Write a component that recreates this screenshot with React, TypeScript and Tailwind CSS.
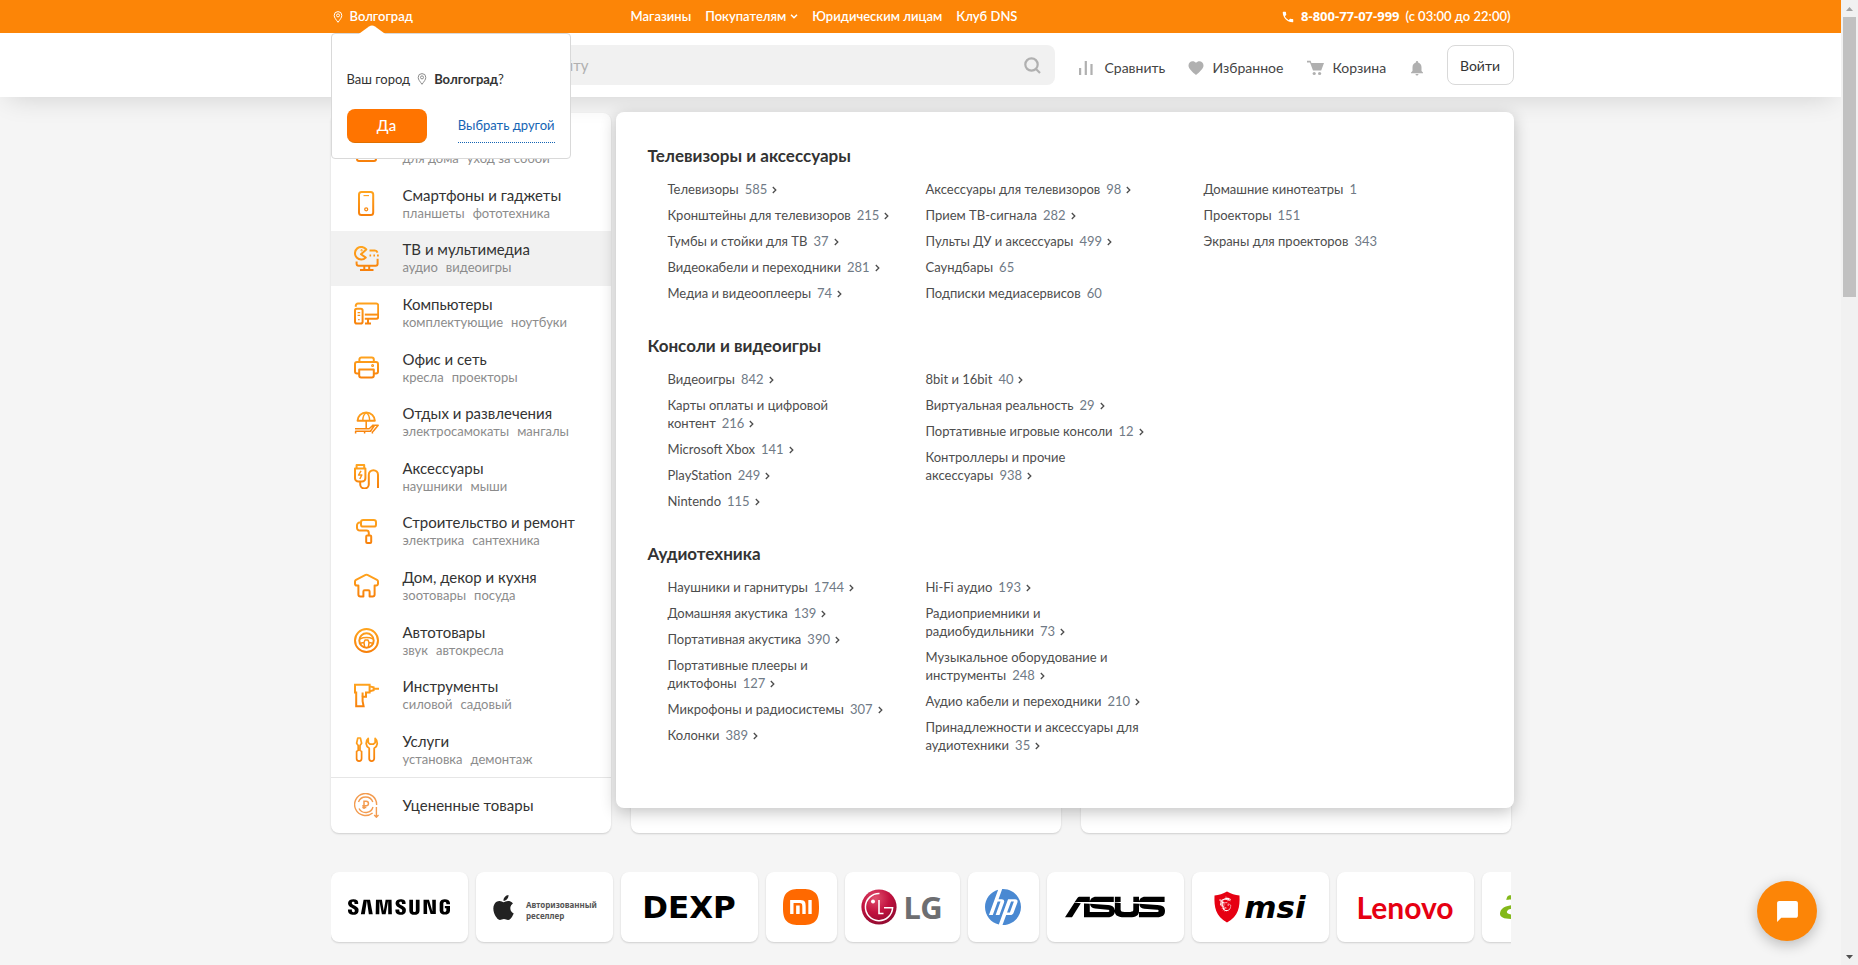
import type { ReactNode } from 'react'
import { SiAcer, SiApple, SiAsus, SiHp, SiMsi, SiSamsung, SiXiaomi } from 'react-icons/si'
import { MdNotifications, MdShoppingCart, MdFavorite, MdPhone, MdChatBubble } from 'react-icons/md'

type Entry = { name: string; count: number; more?: boolean }
type Group = { title: string; columns: Entry[][] }

const e = (name: string, count: number, more = true): Entry => ({ name, count, more })

const groups: Group[] = [
  {
    title: 'Телевизоры и аксессуары',
    columns: [
      [
        e('Телевизоры', 585),
        e('Кронштейны для телевизоров', 215),
        e('Тумбы и стойки для ТВ', 37),
        e('Видеокабели и переходники', 281),
        e('Медиа и видеооплееры', 74),
      ],
      [
        e('Аксессуары для телевизоров', 98),
        e('Прием ТВ-сигнала', 282),
        e('Пульты ДУ и аксессуары', 499),
        e('Саундбары', 65, false),
        e('Подписки медиасервисов', 60, false),
      ],
      [
        e('Домашние кинотеатры', 1, false),
        e('Проекторы', 151, false),
        e('Экраны для проекторов', 343, false),
      ],
    ],
  },
  {
    title: 'Консоли и видеоигры',
    columns: [
      [
        e('Видеоигры', 842),
        e('Карты оплаты и цифровой контент', 216),
        e('Microsoft Xbox', 141),
        e('PlayStation', 249),
        e('Nintendo', 115),
      ],
      [
        e('8bit и 16bit', 40),
        e('Виртуальная реальность', 29),
        e('Портативные игровые консоли', 12),
        e('Контроллеры и прочие аксессуары', 938),
      ],
    ],
  },
  {
    title: 'Аудиотехника',
    columns: [
      [
        e('Наушники и гарнитуры', 1744),
        e('Домашняя акустика', 139),
        e('Портативная акустика', 390),
        e('Портативные плееры и диктофоны', 127),
        e('Микрофоны и радиосистемы', 307),
        e('Колонки', 389),
      ],
      [
        e('Hi-Fi аудио', 193),
        e('Радиоприемники и радиобудильники', 73),
        e('Музыкальное оборудование и инструменты', 248),
        e('Аудио кабели и переходники', 210),
        e('Принадлежности и аксессуары для аудиотехники', 35),
      ],
    ],
  },
]

function LineIcon({ children }: { children: ReactNode }) {
  return (
    <svg viewBox="0 0 25 25" className="size-[25px] shrink-0" fill="none" stroke="url(#warm)" strokeWidth="2" strokeLinejoin="round" aria-hidden="true">
      {children}
    </svg>
  )
}

type Category = { title: string; subs: string[]; icon: ReactNode; active?: boolean }

const categories: Category[] = [
  {
    title: 'Бытовая техника',
    subs: ['для дома', 'уход за собой'],
    icon: (
      <>
        <rect x="3" y="1" width="19" height="23" rx="2" />
        <path d="M3 7h19" />
        <circle cx="12.500" cy="15" r="5" />
      </>
    ),
  },
  {
    title: 'Смартфоны и гаджеты',
    subs: ['планшеты', 'фототехника'],
    icon: (
      <>
        <rect x="5" y="1" width="14.200" height="23" rx="2.500" />
        <path d="M9.500 4.600h5.500" strokeWidth="1.100" />
        <circle cx="12.200" cy="18.300" r="1.500" strokeWidth="1.300" />
      </>
    ),
  },
  {
    title: 'ТВ и мультимедиа',
    subs: ['аудио', 'видеоигры'],
    active: true,
    icon: (
      <>
        <path d="M12.300 3.400A6.300 6.300 0 1 0 11.800 11.600L7 8.200z" />
        <circle cx="7.600" cy="4.200" r="0.700" strokeWidth="1" />
        <path d="M15.500 4.600h5.300a3 3 0 0 1 2.700 2" />
        <path d="M15.500 9.400h1.600M19.400 9.400h1.600M23 9.400h1.800" />
        <path d="M2.600 15.500v2.300a2 2 0 0 0 2 2h17a2 2 0 0 0 2-2v-5" />
        <path d="M10.300 20v3.500M15.200 20v3.500M6 24h13.500" />
      </>
    ),
  },
  {
    title: 'Компьютеры',
    subs: ['комплектующие', 'ноутбуки'],
    icon: (
      <>
        <path d="M1.800 5.800V4.600a2 2 0 0 1 2-2h18.400a2 2 0 0 1 2 2v11.200a2 2 0 0 1-2 2H10.800" />
        <path d="M10.800 13.600H24" />
        <rect x="1" y="7.800" width="7.600" height="14.800" rx="1.800" />
        <path d="M3.600 11.600h2.600M3.600 14.400h2.600M4.200 18.600h1.400" strokeWidth="1.300" />
        <path d="M14 18v4M11 22.400h6" />
      </>
    ),
  },
  {
    title: 'Офис и сеть',
    subs: ['кресла', 'проекторы'],
    icon: (
      <>
        <path d="M5.400 7V4.400a2 2 0 0 1 2-2h10.400a2 2 0 0 1 2 2V7" />
        <path d="M5 18.600H3a2 2 0 0 1-2-2V9a2 2 0 0 1 2-2h19a2 2 0 0 1 2 2v7.600a2 2 0 0 1-2 2h-2" />
        <path d="M5.200 14.400h14.600v6.200a2 2 0 0 1-2 2H7.200a2 2 0 0 1-2-2z" />
        <circle cx="18.600" cy="10.400" r="0.900" strokeWidth="1.200" />
      </>
    ),
  },
  {
    title: 'Отдых и развлечения',
    subs: ['электросамокаты', 'мангалы'],
    icon: (
      <>
        <path d="M3.600 10.800a8.600 8.400 0 0 1 17.200 0z" />
        <path d="M8.800 10.600c0-4 1.300-6.800 3.400-7.800 2.100 1 3.400 3.800 3.400 7.800" strokeWidth="1.400" />
        <path d="M12.200 11v7.500" strokeWidth="1.600" />
        <path d="M1.600 23.500v-2.300h14.800l4.200-6h3.600l-5.200 6.200M1 18.800h14.200l4.400-4.200M10.600 21.200v2.300M18.400 21.200v2.300" strokeWidth="1.500" />
      </>
    ),
  },
  {
    title: 'Аксессуары',
    subs: ['наушники', 'мыши'],
    icon: (
      <>
        <path d="M2.600 4V1h7.600v3" />
        <path d="M1 4.400h10.400v9.800a3.400 3.400 0 0 1-3.400 3.400H4.400A3.400 3.400 0 0 1 1 14.200z" />
        <path d="M7 6.800L4.600 11h3.200L5.800 15" strokeWidth="1.500" />
        <path d="M6.200 18v2.200a4.300 4.300 0 0 0 8.600 0V10.800a4.600 4.600 0 0 1 9.200 0V24" />
      </>
    ),
  },
  {
    title: 'Строительство и ремонт',
    subs: ['электрика', 'сантехника'],
    icon: (
      <>
        <rect x="7" y="1" width="15" height="6.600" rx="2.200" />
        <path d="M7 3.600H5.600A2.600 2.600 0 0 0 3 6.200v2.600a2.800 2.800 0 0 0 2.800 2.800h6.600a2.400 2.400 0 0 1 2.400 2.400v2.400" />
        <path d="M13.200 16.400h3a1 1 0 0 1 1 1V23a1 1 0 0 1-1 1h-3a1 1 0 0 1-1-1v-5.600a1 1 0 0 1 1-1z" />
      </>
    ),
  },
  {
    title: 'Дом, декор и кухня',
    subs: ['зоотовары', 'посуда'],
    icon: (
      <path d="M11.600 1.900L2 6.900a1.800 1.800 0 0 0-1 1.600v2.300A1.800 1.800 0 0 0 2.800 12.600H4.400v9a2 2 0 0 0 2 2h3v-5.200a1.200 1.200 0 0 1 1.200-1.200h3.800a1.200 1.200 0 0 1 1.200 1.200v5.200h3a2 2 0 0 0 2-2v-9h1.600A1.800 1.800 0 0 0 24 10.800V8.500a1.800 1.800 0 0 0-1-1.600l-9.600-5a2 2 0 0 0-1.800 0z" />
    ),
  },
  {
    title: 'Автотовары',
    subs: ['звук', 'автокресла'],
    icon: (
      <>
        <circle cx="12.500" cy="12.500" r="11.500" />
        <circle cx="12.500" cy="12.500" r="7.200" />
        <path d="M5.600 11c4-1.600 9.800-1.600 13.800 0M6.200 15.200l3.800-.6M18.800 15.200l-3.800-.6M10.600 19.200l-.6-4.600 1-2.600h3l1 2.600-.6 4.600" strokeWidth="1.500" />
      </>
    ),
  },
  {
    title: 'Инструменты',
    subs: ['силовой', 'садовый'],
    icon: (
      <>
        <path d="M1 1.800h14.600v7.800H12v4.200H8.600v4.400l1 5H2.200V9.600H1z" strokeLinejoin="miter" />
        <path d="M15.600 3.400l4 1v2.800l-4 1M19.600 5.800H25M8.600 9.600v4" strokeLinejoin="miter" />
      </>
    ),
  },
  {
    title: 'Услуги',
    subs: ['установка', 'демонтаж'],
    icon: (
      <>
        <path d="M3.800 1h2.600l1.200 5.200-1.600 2.200v5l1.600 1v7.200a2.500 2.500 0 0 1-5 0v-7.200l1.600-1v-5L2.600 6.200z" strokeWidth="1.700" />
        <path d="M14.200 1.400a6 6 0 0 0 1 9.800v10.400a2.500 2.500 0 0 0 5 0V11.200a6 6 0 0 0 1-9.800v4.200l-2 1.600h-3l-2-1.600z" strokeWidth="1.800" />
      </>
    ),
  },
]

function Pin({ className }: { className: string }) {
  return (
    <svg viewBox="0 0 10 12" className={className} fill="none" stroke="currentColor" strokeWidth="1" aria-hidden="true">
      <path d="M5 11.300C3 8.500 1.200 6.600 1.200 4.400a3.800 3.800 0 0 1 7.600 0C8.800 6.600 7 8.500 5 11.300z" />
      <circle cx="5" cy="4.400" r="1.500" />
    </svg>
  )
}

function TopBar() {
  return (
    <div className="bg-[#fc8507] text-white">
      <div className="mx-auto flex h-[33px] w-full max-w-[1180px] items-center text-[13px] font-semibold">
        <a href="#city" className="flex w-[300px] items-center gap-[7px] pl-0.5">
          <Pin className="h-3 w-2.5" />
          Волгоград
        </a>
        <nav className="flex flex-1 items-center gap-[14px]">
          <a href="#shops">Магазины</a>
          <a href="#buyers" className="flex items-center gap-1">
            Покупателям
            <svg viewBox="0 0 8 5" className="h-[5px] w-2" fill="none" stroke="currentColor" strokeWidth="1.500" aria-hidden="true">
              <path d="M1 .8l3 3 3-3" />
            </svg>
          </a>
          <a href="#business">Юридическим лицам</a>
          <a href="#club">Клуб DNS</a>
        </nav>
        <a href="tel:88007707999" className="flex items-center">
          <MdPhone className="mr-1.5 size-[14px]" />
          <span className='font-["Noto_Sans",sans-serif] font-bold'>8-800-77-07-999</span>
          <span className="ml-1.5">(с 03:00 до 22:00)</span>
        </a>
      </div>
    </div>
  )
}

function CityPopover() {
  return (
    <div className="absolute top-0 left-0 z-30 flex h-[126px] w-[240px] flex-col rounded-[4px] border border-[#d9d9d9] bg-white px-[15px] pt-9 text-[#333]">
      <svg viewBox="0 0 28 10" className="absolute -top-[10px] left-[26px] h-[11px] w-[28px]" aria-hidden="true">
        <path d="M0 10L11 2Q14 0 17 2L28 10z" fill="#fff" />
      </svg>
      <p className="flex items-center text-[13px] leading-[18px]">
        Ваш город
        <Pin className="mr-[7px] ml-[7px] h-3 w-2.5 text-[#8c8c8c]" />
        <b className="font-bold">Волгоград</b>?
      </p>
      <div className="mt-[21px] flex items-start justify-between">
        <button type="button" className="h-[34px] w-20 rounded-lg border-b border-[#e06f00] bg-[#ff7400] text-[15px] font-medium text-white">
          Да
        </button>
        <a href="#choose" className="flex h-[34px] items-center border-b border-dotted border-[#1464b4] text-[13px] text-[#1464b4]">
          Выбрать другой
        </a>
      </div>
    </div>
  )
}

function Header() {
  return (
    <header className="relative z-10 bg-white shadow-[0_8px_26px_-8px_rgba(0,0,0,0.16)]">
      <TopBar />
      <div className="relative mx-auto flex h-16 w-full max-w-[1180px] items-center">
        <CityPopover />
        <form className="ml-[136px] flex h-10 w-[588px] items-center rounded-lg bg-[#f1f1f1] pr-[14px] pl-4">
          <input type="search" aria-label="Поиск по сайту" placeholder="Поиск по сайту" className="min-w-0 flex-1 bg-transparent text-[15px] outline-none placeholder:text-[#b0b0b0]" />
          <button type="button" aria-label="Найти">
            <svg viewBox="0 0 17 17" className="size-[17px]" fill="none" stroke="#b0b0b0" strokeWidth="2.200" aria-hidden="true">
              <circle cx="7.500" cy="7.500" r="6.200" />
              <path d="M12 12l4 4" />
            </svg>
          </button>
        </form>
        <nav className="mt-[5px] ml-6 flex items-center text-[14px] text-[#444]">
          <a href="#compare" className="flex w-[108px] items-center gap-3">
            <svg viewBox="0 0 14 14" className="size-[14px]" fill="#b0b0b0" aria-hidden="true">
              <path d="M0 7h2.200v7H0zM5.700 0h2.200v14H5.700zM11.400 3h2.200v11h-2.200z" />
            </svg>
            Сравнить
          </a>
          <a href="#favorites" className="flex w-[120px] items-center gap-2">
            <MdFavorite className="size-[18px] text-[#b0b0b0]" />
            Избранное
          </a>
          <a href="#cart" className="flex w-[101px] items-center gap-2">
            <svg viewBox="0 0 18 16" className="h-4 w-[18px]" fill="#b0b0b0" aria-hidden="true">
              <path d="M0 .8h3.600L4.400 3H17l-2.800 7.600H6L3 2.600H0z" />
              <circle cx="7.200" cy="13.500" r="1.600" />
              <circle cx="12.600" cy="13.500" r="1.600" />
            </svg>
            Корзина
          </a>
          <a href="#notifications" aria-label="Уведомления">
            <MdNotifications className="size-[18px] text-[#b0b0b0]" />
          </a>
        </nav>
        <button type="button" className="-mr-[3px] ml-auto h-10 w-[67px] shrink-0 rounded-lg border border-[#d9d9d9] text-[14px] text-[#333]">
          Войти
        </button>
      </div>
    </header>
  )
}

function Sidebar() {
  return (
    <aside className="w-[280px] shrink-0 rounded-lg bg-white pt-[9px] shadow-[0_1px_2px_rgba(0,0,0,0.16)]">
      <ul className="grid h-[655px] grid-rows-12">
        {categories.map((c) => (
          <li key={c.title} className={c.active ? 'bg-[#f1f1f1]' : ''}>
            <a href="#category" className="flex h-full items-center gap-6 pl-[23px]">
              <LineIcon>{c.icon}</LineIcon>
              <span className="flex flex-col">
                <span className="text-[15px] leading-[18px] text-[#333]">{c.title}</span>
                <span className="flex gap-2 text-[13px] leading-[18px] text-[#8c8c8c]">
                  {c.subs.map((s) => (
                    <span key={s}>{s}</span>
                  ))}
                </span>
              </span>
            </a>
          </li>
        ))}
      </ul>
      <a href="#discount" className="flex h-14 items-center gap-6 border-t border-[#e6e6e6] pl-[23px] text-[15px] text-[#333]">
        <svg viewBox="0 0 25 25" className="size-[25px] shrink-0" fill="none" stroke="#f39c50" strokeWidth="1.400" aria-hidden="true">
          <path d="M18.600 20A11 11 0 1 1 22.600 12" />
          <path d="M4.500 9A7.600 7.600 0 0 1 18.800 9M19 14A7.600 7.600 0 0 1 5 15.500" />
          <path d="M10 16V8.200h2.200a2.200 2.200 0 0 1 0 4.500H8.300M8.300 14.500h4" strokeWidth="1.500" />
          <path d="M22.400 14v10M20.200 22l2.200 2.200 2.200-2.200" />
        </svg>
        Уцененные товары
      </a>
    </aside>
  )
}

function EntryLink({ entry }: { entry: Entry }) {
  const words = entry.name.split(' ')
  const last = words.pop()
  return (
    <a href="#section" className="block text-[13px] leading-[18px] text-[#4d4d4d]">
      {words.length > 0 && words.join(' ') + ' '}
      <span className="whitespace-nowrap">
        {last}
        <span className="ml-1.5 text-[#707a86]">{entry.count}</span>
        {entry.more && (
          <svg viewBox="0 0 5 8" className="ml-[5px] inline-block h-2 w-[5px] align-baseline" fill="none" stroke="#4d4d4d" strokeWidth="1.300" aria-hidden="true">
            <path d="M.8 1l3 3-3 3" />
          </svg>
        )}
      </span>
    </a>
  )
}

function MegaMenu() {
  return (
    <section className="absolute -top-px -right-[3px] left-[285px] z-20 flex flex-col gap-6 rounded-lg bg-white px-8 pt-8 pb-[46px] shadow-[0_4px_16px_rgba(0,0,0,0.24)]">
      {groups.map((g) => (
        <div key={g.title}>
          <h2 className="text-[17px] leading-6 font-bold text-[#333]">{g.title}</h2>
          <div className="mt-3 grid grid-cols-[258px_278px_1fr] pl-5">
            {g.columns.map((col) => (
              <ul key={col[0].name} className="max-w-[228px]">
                {col.map((entry) => (
                  <li key={entry.name} className="mb-2">
                    <EntryLink entry={entry} />
                  </li>
                ))}
              </ul>
            ))}
          </div>
        </div>
      ))}
    </section>
  )
}

function LgMark() {
  return (
    <span className="flex items-center gap-1.5">
      <svg viewBox="0 0 36 36" className="size-9" aria-hidden="true">
        <defs>
          <radialGradient id="lgFill" cx="0.400" cy="0.250" r="0.800">
            <stop offset="0" stopColor="#e0506e" />
            <stop offset="0.500" stopColor="#c2123f" />
            <stop offset="1" stopColor="#8e0a30" />
          </radialGradient>
        </defs>
        <circle cx="18" cy="18" r="17.600" fill="url(#lgFill)" />
        <path d="M18.500 4.500A13.600 13.600 0 1 0 31.600 18.800H23" fill="none" stroke="#fff" strokeWidth="1.500" />
        <path d="M18 11v13.500h4.500" fill="none" stroke="#fff" strokeWidth="1.600" />
        <circle cx="12" cy="12.500" r="2" fill="#fff" />
      </svg>
      <span className='font-["Noto_Sans",sans-serif] text-[31px] leading-9 font-bold text-[#6d6e71]'>LG</span>
    </span>
  )
}

type Brand = { name: string; width: string; mark: ReactNode }

const brands: Brand[] = [
  { name: 'Samsung', width: 'w-[137px]', mark: <SiSamsung className="size-[102px] shrink-0 text-black" /> },
  {
    name: 'Apple',
    width: 'w-[137px]',
    mark: (
      <span className="flex items-center gap-2.5 text-[#222]">
        <SiApple className="size-[25px]" />
        <span className='pt-1.5 font-["Noto_Sans",sans-serif] text-[8px] leading-[11px] font-bold text-[#555]'>
          Авторизованный
          <br />
          реселлер
        </span>
      </span>
    ),
  },
  {
    name: 'DEXP',
    width: 'w-[137px]',
    mark: <span className='font-["DejaVu_Sans",sans-serif] text-[31px] leading-none font-bold text-black'>DEXP</span>,
  },
  { name: 'Xiaomi', width: 'w-[71px]', mark: <SiXiaomi className="size-9 text-[#ff6900]" /> },
  { name: 'LG', width: 'w-[115px]', mark: <LgMark /> },
  { name: 'HP', width: 'w-[71px]', mark: <SiHp className="size-9 text-[#4a89d2]" /> },
  { name: 'ASUS', width: 'w-[137px]', mark: <SiAsus className="size-[100px] shrink-0 text-black" /> },
  {
    name: 'MSI',
    width: 'w-[137px]',
    mark: (
      <span className="flex items-center gap-1">
        <svg viewBox="0 0 26 32" className="h-8 w-[26px] shrink-0" aria-hidden="true">
          <path d="M13 .5c4 2.500 8 3.500 12.500 4C26 16 24.500 25 13 31.500 1.500 25 0 16 .5 4.500 5 4 9 3 13 .5z" fill="#e60012" />
          <SiMsi x="3" y="5" width="20" height="20" color="#fff" />
        </svg>
        <span className='font-["DejaVu_Sans",sans-serif] text-[31px] leading-none font-bold text-black italic'>msi</span>
      </span>
    ),
  },
  {
    name: 'Lenovo',
    width: 'w-[137px]',
    mark: <span className="text-[30px] leading-none font-bold text-[#e60012]">Lenovo</span>,
  },
  { name: 'Acer', width: 'w-[137px]', mark: <SiAcer className="size-[100px] shrink-0 text-[#83b81a]" /> },
]

function Brands() {
  return (
    <ul className="mt-[39px] flex gap-2 overflow-hidden pb-[23px]">
      {brands.map((b) => (
        <li key={b.name} className="shrink-0">
          <a href="#brand" aria-label={b.name} className={`flex h-[70px] items-center justify-center overflow-hidden rounded-lg bg-white shadow-[0_1px_2px_rgba(0,0,0,0.16)] ${b.width}`}>
            {b.mark}
          </a>
        </li>
      ))}
    </ul>
  )
}

export default function App() {
  return (
    <div className='flex min-h-screen bg-[#f5f5f5] font-["Lato","Noto_Sans",sans-serif]'>
      <svg className="absolute size-0" aria-hidden="true">
        <defs>
          <linearGradient id="warm" gradientUnits="userSpaceOnUse" x1="0" y1="0" x2="0" y2="25">
            <stop offset="0" stopColor="#ffa51f" />
            <stop offset="1" stopColor="#f77f0a" />
          </linearGradient>
        </defs>
      </svg>
      <div className="min-w-0 flex-1 overflow-hidden">
        <Header />
        <main className="mx-auto w-full max-w-[1180px] pt-4">
          <div className="relative flex gap-5">
            <Sidebar />
            <div className="grid flex-1 grid-cols-2 gap-5">
              <div className="rounded-lg bg-white shadow-[0_1px_2px_rgba(0,0,0,0.16)]" />
              <div className="rounded-lg bg-white shadow-[0_1px_2px_rgba(0,0,0,0.16)]" />
            </div>
            <MegaMenu />
          </div>
          <Brands />
        </main>
      </div>
      <div className="flex w-[17px] shrink-0 flex-col items-center bg-[#f1f1f1]" aria-hidden="true">
        <svg viewBox="0 0 17 17" className="size-[17px]">
          <path d="M5 11l3.500-4 3.500 4z" fill="#a3a3a3" />
        </svg>
        <div className="h-[280px] w-[13px] bg-[#c1c1c1]" />
        <svg viewBox="0 0 17 17" className="mt-auto size-[17px]">
          <path d="M5 7h7l-3.500 4z" fill="#505050" />
        </svg>
      </div>
      <button type="button" aria-label="Открыть чат" className="fixed right-[41px] bottom-6 flex size-[60px] items-center justify-center rounded-full bg-[#fc8507] text-white shadow-[0_4px_14px_rgba(0,0,0,0.24)]">
        <MdChatBubble className="size-[25px]" />
      </button>
    </div>
  )
}
